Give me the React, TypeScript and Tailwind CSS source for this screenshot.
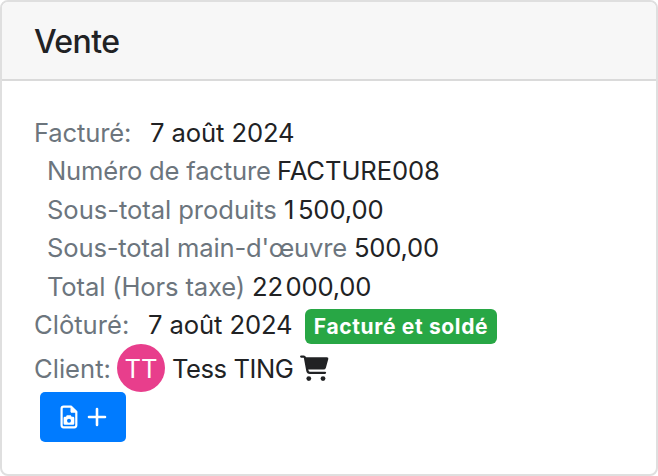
import type { ReactNode } from "react";

function Row({
  label,
  labelClass,
  value,
  valueClass = "tracking-[-0.1px]",
  children,
}: {
  label: string;
  labelClass: string;
  value: string;
  valueClass?: string;
  children?: ReactNode;
}) {
  return (
    <div className="flex h-[38.4px] items-center whitespace-pre">
      <span className={`shrink-0 text-[#6c757d] ${labelClass}`}>{label}</span>
      <span className={`shrink-0 ${valueClass}`}>{value}</span>
      {children}
    </div>
  );
}

function FileCameraIcon() {
  return (
    <svg className="h-[24px] w-[18px]" viewBox="0 0 18 24" fill="none">
      <path
        d="M3.6 1.7H11.2L16.3 6.8V20.3Q16.3 22.3 14.3 22.3H3.6Q1.6 22.3 1.6 20.3V3.7Q1.6 1.7 3.6 1.7Z"
        stroke="white"
        strokeWidth="2.2"
        strokeLinejoin="round"
      />
      <path d="M11 1.7V7.2H16.5Z" fill="white" stroke="white" strokeLinejoin="round" />
      <path
        fillRule="evenodd"
        fill="white"
        d="M6.8 10.3H10.8L11.6 11.8H13Q14.3 11.8 14.3 13.1V18.4Q14.3 19.7 13 19.7H4.9Q3.6 19.7 3.6 18.4V13.1Q3.6 11.8 4.9 11.8H6ZM9 13.8A2 2 0 1 0 9 17.8A2 2 0 1 0 9 13.8Z"
      />
    </svg>
  );
}

function CartIcon() {
  return (
    <svg className="h-[27px] w-[29px] shrink-0" viewBox="0 0 29 27" fill="none">
      <path
        d="M1.2 1.6H3.6Q4.7 1.6 5 2.7L7.4 15.7Q7.8 17.8 9.8 17.8H25"
        stroke="currentColor"
        strokeWidth="2.3"
        strokeLinecap="round"
        strokeLinejoin="round"
      />
      <path
        d="M5 2.2H26.8Q28.8 2.2 28.3 4.1L25.9 12.7Q25.4 14.6 23.4 14.6H7.4Z"
        fill="currentColor"
      />
      <circle cx="8.8" cy="23.6" r="2.4" fill="currentColor" />
      <circle cx="23" cy="23.6" r="2.4" fill="currentColor" />
    </svg>
  );
}

export default function App() {
  return (
    <div className="h-[476px] w-[658px] overflow-hidden rounded-[8px] border-2 border-[#dfdfdf] bg-white font-['Inter',sans-serif] text-[25.6px] leading-[38.4px] text-[#212224]">
      <header className="flex h-[79px] items-center border-b-2 border-[#dadada] bg-[#f7f7f7] pl-[32px] pt-[2px]">
        <h1 className="text-[32px] font-medium leading-[38px] tracking-[-0.6px]">Vente</h1>
      </header>
      <main className="pl-[32px] pt-[33px]">
        <Row label="Facturé:" labelClass="w-[116px] tracking-[-0.15px]" value="7 août 2024" />
        <div className="pl-[13px]">
          <Row
            label="Numéro de facture"
            labelClass="w-[230px] tracking-[-0.2px]"
            value="FACTURE008"
          />
          <Row
            label="Sous-total produits"
            labelClass="w-[237px] tracking-[-0.06px]"
            value="1 500,00"
            valueClass="tracking-[-0.1px] [word-spacing:-3.5px]"
          />
          <Row
            label="Sous-total main-d'œuvre"
            labelClass="w-[307px] tracking-[-0.17px]"
            value="500,00"
            valueClass="tracking-[-0.2px]"
          />
          <Row
            label="Total (Hors taxe)"
            labelClass="w-[205px] tracking-[-0.15px]"
            value="22 000,00"
            valueClass="tracking-[-0.2px] [word-spacing:-4.3px]"
          />
        </div>
        <Row
          label="Clôturé:"
          labelClass="w-[114px]"
          value="7 août 2024"
          valueClass="w-[157px] tracking-[-0.1px]"
        >
          <span className="mt-[3px] flex h-[35px] w-[192px] items-center justify-center rounded-[6px] bg-[#28a745] pt-px text-[21px] font-bold tracking-[0.65px] text-white">
            Facturé et soldé
          </span>
        </Row>
        <div className="flex h-[48px] items-center whitespace-pre">
          <span className="w-[83px] shrink-0 pt-px text-[#6c757d]">Client:</span>
          <span className="flex size-[48px] shrink-0 items-center justify-center rounded-full bg-[#e83e8c] pt-px text-white">
            TT
          </span>
          <span className="ml-[7px] w-[128px] shrink-0 pt-px tracking-[-0.45px]">Tess TING</span>
          <CartIcon />
        </div>
        <button className="ml-[6px] flex h-[50px] w-[86px] items-center rounded-[5px] bg-[#007bff] pl-[20px]">
          <FileCameraIcon />
          <svg className="ml-[9px] size-[20px]" viewBox="0 0 20 20" fill="none">
            <path d="M10 2V18M2 10H18" stroke="white" strokeWidth="2.6" strokeLinecap="round" />
          </svg>
        </button>
      </main>
    </div>
  );
}
